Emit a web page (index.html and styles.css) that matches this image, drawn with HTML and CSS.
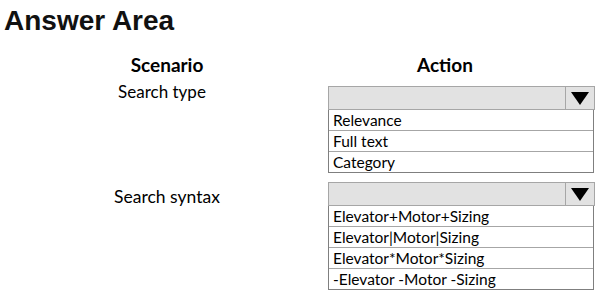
FILE: index.html
```html
<!DOCTYPE html>
<html>
<head>
<meta charset="utf-8">
<link rel="stylesheet" href="styles.css">
</head>
<body>
<h1 class="title">Answer Area</h1>
<div class="grid">
  <div class="head scen">Scenario</div>
  <div class="head act">Action</div>

  <div class="label label-first scen">Search type</div>
  <div class="cell">
    <div class="dd">
      <div class="dd-head"><span class="dd-blank"></span><span class="dd-btn"><svg width="18" height="13" viewBox="0 0 18 13"><polygon points="0,0 18,0 9,13" fill="#000"/></svg></span></div>
      <ul class="dd-list">
        <li>Relevance</li>
        <li>Full text</li>
        <li>Category</li>
      </ul>
    </div>
  </div>

  <div class="label label-low scen">Search syntax</div>
  <div class="cell">
    <div class="dd">
      <div class="dd-head"><span class="dd-blank"></span><span class="dd-btn"><svg width="18" height="13" viewBox="0 0 18 13"><polygon points="0,0 18,0 9,13" fill="#000"/></svg></span></div>
      <ul class="dd-list">
        <li>Elevator+Motor+Sizing</li>
        <li>Elevator|Motor|Sizing</li>
        <li>Elevator*Motor*Sizing</li>
        <li>-Elevator -Motor -Sizing</li>
      </ul>
    </div>
  </div>
</div>
</body>
</html>
```
FILE: styles.css
```css
html, body {
  margin: 0;
  padding: 0;
  background: #fff;
}
body {
  width: 607px;
  height: 303px;
  overflow: hidden;
  font-family: Lato, "Open Sans", sans-serif;
  color: #000;
}
.title {
  margin: 0;
  padding: 7px 0 0 4px;
  height: 35px;
  font-family: "Liberation Sans", Arial, sans-serif;
  font-weight: bold;
  font-size: 28px;
  line-height: 28px;
  color: #111;
}
.grid {
  display: grid;
  grid-template-columns: 295px 300px;
  padding-top: 12px;
}
.head {
  font-weight: bold;
  font-size: 19px;
  line-height: 22px;
  height: 32px;
}
.scen {
  text-align: center;
  padding-left: 39px;
}
.act {
  text-align: center;
}
.label {
  font-size: 17px;
  line-height: 12px;
}
.label-first {
  padding-left: 29px;
}
.label-low {
  font-size: 17.5px;
  padding-top: 9px;
}
.cell {
  padding-left: 33px;
  padding-bottom: 9px;
}
.dd {
  width: 267px;
}
.dd-head {
  display: flex;
  height: 22px;
  border: 1px solid #a6a6a6;
  background: #e2e2e2;
}
.dd-blank {
  flex: 1;
  border-right: 1px solid #a6a6a6;
}
.dd-btn {
  width: 28px;
  display: flex;
  align-items: center;
  justify-content: center;
}
.dd-list {
  list-style: none;
  margin: 0;
  padding: 0;
  border: 1px solid #7f7f7f;
  border-top: none;
  margin-right: 1px;
}
.dd-list li {
  height: 20px;
  line-height: 20px;
  font-size: 15.5px;
  padding-left: 4px;
  border-top: 1px solid #a6a6a6;
  color: #000;
}
.dd-list li:first-child {
  border-top: none;
}
```
